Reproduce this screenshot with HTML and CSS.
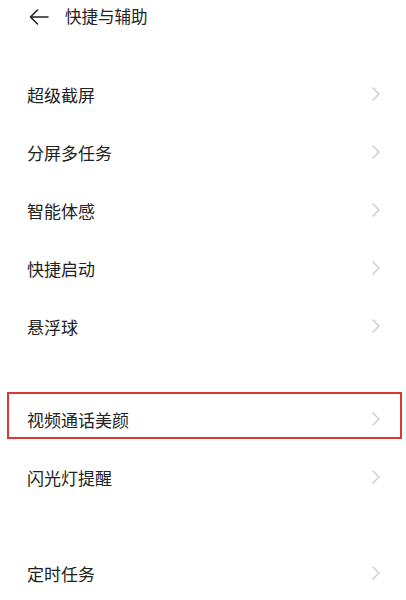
FILE: index.html
```html
<!DOCTYPE html>
<html lang="zh">
<head>
<meta charset="utf-8">
<link rel="stylesheet" href="styles.css">
</head>
<body>
<div class="page">
  <header class="header">
    <svg class="back" width="20" height="16" viewBox="0 0 20 16"><path d="M19 8H1.5M8.5 1L1.5 8l7 7" fill="none" stroke="#222" stroke-width="1.6" stroke-linecap="round" stroke-linejoin="round"/></svg>
    <span class="title">快捷与辅助</span>
  </header>
  <div class="group g1">
    <div class="row"><span>超级截屏</span><svg class="chev" width="10" height="16" viewBox="0 0 10 16"><path d="M1.5 1.5L8 8l-6.5 6.5" fill="none" stroke="#c9c9c9" stroke-width="1.3"/></svg></div>
    <div class="row"><span>分屏多任务</span><svg class="chev" width="10" height="16" viewBox="0 0 10 16"><path d="M1.5 1.5L8 8l-6.5 6.5" fill="none" stroke="#c9c9c9" stroke-width="1.3"/></svg></div>
    <div class="row"><span>智能体感</span><svg class="chev" width="10" height="16" viewBox="0 0 10 16"><path d="M1.5 1.5L8 8l-6.5 6.5" fill="none" stroke="#c9c9c9" stroke-width="1.3"/></svg></div>
    <div class="row"><span>快捷启动</span><svg class="chev" width="10" height="16" viewBox="0 0 10 16"><path d="M1.5 1.5L8 8l-6.5 6.5" fill="none" stroke="#c9c9c9" stroke-width="1.3"/></svg></div>
    <div class="row"><span>悬浮球</span><svg class="chev" width="10" height="16" viewBox="0 0 10 16"><path d="M1.5 1.5L8 8l-6.5 6.5" fill="none" stroke="#c9c9c9" stroke-width="1.3"/></svg></div>
  </div>
  <div class="group g2">
    <div class="row"><span>视频通话美颜</span><svg class="chev" width="10" height="16" viewBox="0 0 10 16"><path d="M1.5 1.5L8 8l-6.5 6.5" fill="none" stroke="#c9c9c9" stroke-width="1.3"/></svg></div>
    <div class="row"><span>闪光灯提醒</span><svg class="chev" width="10" height="16" viewBox="0 0 10 16"><path d="M1.5 1.5L8 8l-6.5 6.5" fill="none" stroke="#c9c9c9" stroke-width="1.3"/></svg></div>
  </div>
  <div class="group g3">
    <div class="row"><span>定时任务</span><svg class="chev" width="10" height="16" viewBox="0 0 10 16"><path d="M1.5 1.5L8 8l-6.5 6.5" fill="none" stroke="#c9c9c9" stroke-width="1.3"/></svg></div>
  </div>
  <div class="highlight"></div>
</div>
</body>
</html>
```
FILE: styles.css
```css
html, body {
  margin: 0;
  padding: 0;
  background: #fff;
}
body {
  font-family: "Noto Sans CJK SC", "Noto Sans", sans-serif;
  color: #222;
}
.page {
  position: relative;
  width: 406px;
  height: 600px;
  overflow: hidden;
}
.header {
  height: 33px;
  display: flex;
  align-items: center;
  padding-left: 29px;
}
.back {
  display: block;
  margin-right: 16px;
}
.title {
  font-size: 16.5px;
  line-height: 1;
}
.g1 { margin-top: 32px; }
.g2 { margin-top: 35px; }
.g3 { margin-top: 38px; }
.row {
  height: 58px;
  display: flex;
  align-items: center;
  justify-content: space-between;
  padding: 0 25px 0 27px;
  font-size: 17px;
}
.row span { line-height: 1; }
.chev {
  display: block;
}
.highlight {
  position: absolute;
  left: 7px;
  top: 392px;
  width: 391px;
  height: 43px;
  border: 2px solid #d63a30;
}
```
